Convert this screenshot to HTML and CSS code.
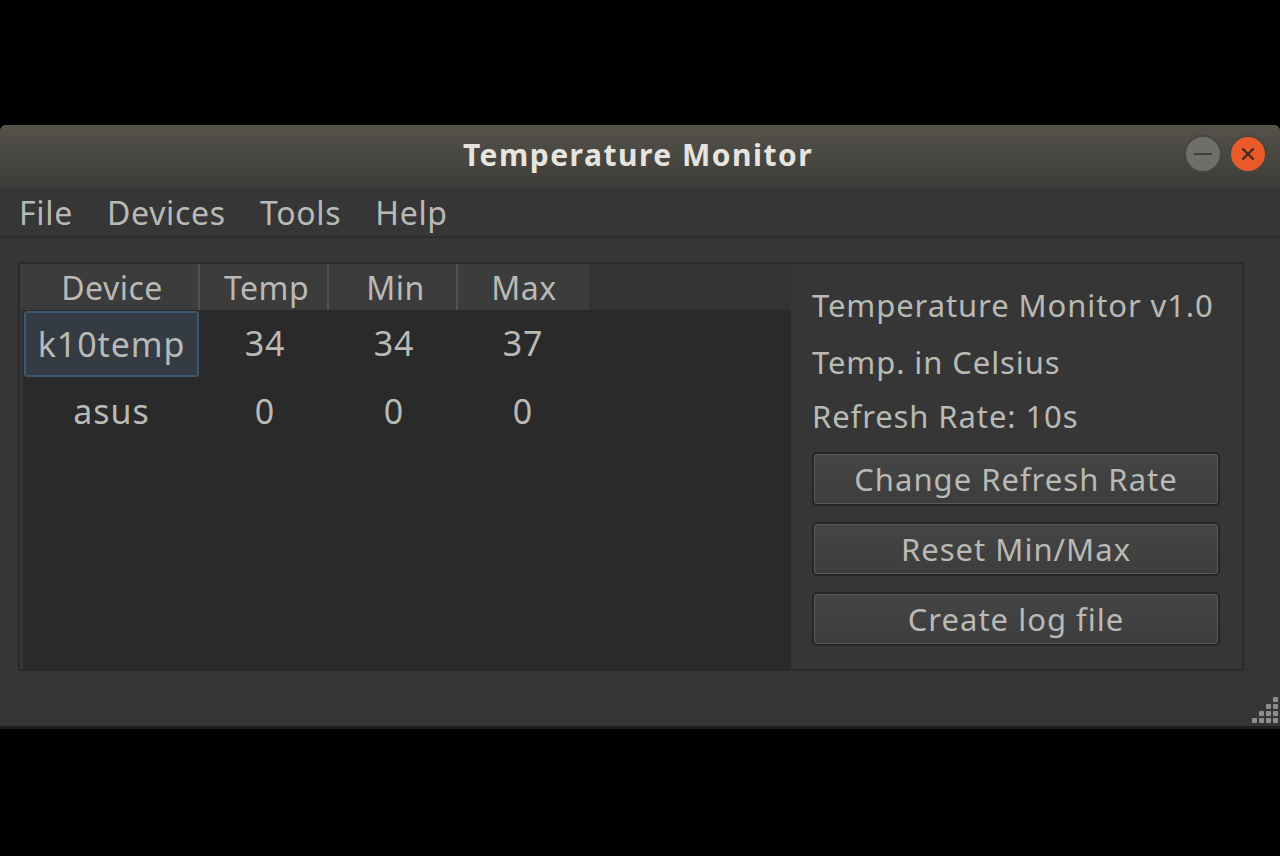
FILE: index.html
```html
<!doctype html>
<html lang="en">
<head>
  <meta charset="UTF-8">
  <title>Temperature Monitor</title>
  <link rel="stylesheet" href="styles.css">
</head>
<body>
  <div class="window">
    <header class="titlebar">
      <span class="title">Temperature Monitor</span>
      <div class="controls">
        <button class="control minimize" aria-label="Minimize">
          <svg width="20" height="20" viewBox="0 0 20 20"><path d="M1 10h18" stroke="#3f3e3b" stroke-width="2" fill="none"/></svg>
        </button>
        <button class="control close" aria-label="Close">
          <svg width="20" height="20" viewBox="0 0 20 20"><path d="M4.5 4.5l11 11M15.5 4.5l-11 11" stroke="#3a2a20" stroke-width="2.2" fill="none"/></svg>
        </button>
      </div>
    </header>

    <nav class="menubar">
      <a>File</a>
      <a>Devices</a>
      <a>Tools</a>
      <a>Help</a>
    </nav>

    <main class="content">
      <div class="panel">
        <section class="table">
          <div class="table-head">
            <div class="head-cell col-device">Device</div>
            <div class="head-cell col-num">Temp</div>
            <div class="head-cell col-num">Min</div>
            <div class="head-cell col-max">Max</div>
          </div>
          <div class="row">
            <div class="cell col-device selected">k10temp</div>
            <div class="cell col-num">34</div>
            <div class="cell col-num">34</div>
            <div class="cell col-max">37</div>
          </div>
          <div class="row">
            <div class="cell col-device">asus</div>
            <div class="cell col-num">0</div>
            <div class="cell col-num">0</div>
            <div class="cell col-max">0</div>
          </div>
        </section>

        <aside class="side">
          <p class="info first">Temperature Monitor v1.0</p>
          <p class="info second">Temp. in Celsius</p>
          <p class="info third">Refresh Rate: 10s</p>
          <button class="btn">Change Refresh Rate</button>
          <button class="btn">Reset Min/Max</button>
          <button class="btn">Create log file</button>
        </aside>
      </div>
    </main>

    <footer class="statusbar">
      <svg class="grip" width="28" height="26" viewBox="0 0 28 26">
        <g fill="#8e8e8b">
          <rect x="21" y="0" width="5" height="5" rx="1"/>
          <rect x="14" y="7" width="5" height="5" rx="1"/>
          <rect x="21" y="7" width="5" height="5" rx="1"/>
          <rect x="7" y="14" width="5" height="5" rx="1"/>
          <rect x="14" y="14" width="5" height="5" rx="1"/>
          <rect x="21" y="14" width="5" height="5" rx="1"/>
          <rect x="0" y="21" width="5" height="5" rx="1"/>
          <rect x="7" y="21" width="5" height="5" rx="1"/>
          <rect x="14" y="21" width="5" height="5" rx="1"/>
          <rect x="21" y="21" width="5" height="5" rx="1"/>
        </g>
      </svg>
    </footer>
  </div>
</body>
</html>
```

FILE: styles.css
```css
*{
  box-sizing: border-box;
}

html, body{
  height: 100%;
}

body{
  margin: 0;
  padding-top: 125px;
  overflow: hidden;
  color: #b9b9b5;
  font-family: "Noto Sans", "Open Sans", sans-serif;
  font-size: 31px;
  letter-spacing: .9px;
  background: #000;
}

.window{
  display: flex;
  height: 604px;
  background: #363636;
  border-bottom: 3px solid #1f1f1d;
  border-radius: 6px 6px 0 0;
  flex-direction: column;
  overflow: hidden;
}

.titlebar{
  display: flex;
  height: 63px;
  flex: none;
  align-items: center;
  justify-content: center;
  position: relative;
  background: linear-gradient(#55524b, #3d3c38);
}

.title{
  color: #e6e4df;
  font-size: 30px;
  font-weight: 700;
  letter-spacing: 1.5px;
  position: relative;
  top: -2px;
  left: -2px;
}

.controls{
  display: flex;
  gap: 7px;
  position: absolute;
  top: 10px;
  right: 13px;
}

.control{
  display: flex;
  width: 38px;
  height: 38px;
  padding: 0;
  border-radius: 50%;
  align-items: center;
  justify-content: center;
}

.minimize{
  background: #6f6e6a;
  border: 2px solid #464541;
}

.close{
  background: #e9592a;
  border: 2px solid #464541;
}

.menubar{
  display: flex;
  height: 50px;
  flex: none;
  padding: 0 19px;
  gap: 34px;
  align-items: center;
  font-size: 32px;
  letter-spacing: .7px;
  border-bottom: 2px solid #2d2d2d;
}

.content{
  flex: 1;
  padding: 24px 36px 0 18px;
}

.panel{
  display: flex;
  height: 409px;
  border: 2px solid #2a2a2a;
}

.table{
  width: 771px;
  flex: none;
  background: #2a2a2a;
  box-shadow: inset 3px 0 0 #383838;
}

.table-head{
  display: flex;
  height: 46px;
  font-size: 32px;
  letter-spacing: .5px;
  background: #333;
}

.head-cell{
  display: flex;
  padding-left: 6px;
  align-items: center;
  justify-content: center;
  background: #3c3c3c;
  border-right: 2px solid #525252;
}

.head-cell.col-max{
  padding-left: 1px;
  border-right: none;
}

.row{
  display: flex;
  height: 68px;
  font-size: 34px;
  padding-bottom: 2px;
}

.cell{
  display: flex;
  align-items: center;
  justify-content: center;
  border-right: 1px solid #272727;
}

.cell.col-num{
  padding-left: 2px;
}

.col-device{
  width: 180px;
}

.col-num{
  width: 129px;
}

.col-max{
  width: 131px;
}

.row .col-device{
  padding-left: 4px;
}

.row .selected{
  width: 175px;
  height: 66px;
  margin: 1px 1px 0 4px;
  padding-left: 0;
  background: #343b43;
  border: 2px solid #3b5670;
  border-radius: 3px;
  background-clip: padding-box;
}

.side{
  display: flex;
  flex: 1;
  padding: 0 22px 0 21px;
  flex-direction: column;
}

.info{
  margin: 0;
  line-height: 40px;
}

.first{
  margin-top: 21px;
}

.second{
  margin-top: 17px;
}

.third{
  margin-top: 14px;
}

.btn{
  height: 54px;
  margin-top: 16px;
  padding: 0;
  color: #b9b9b5;
  font-family: inherit;
  font-size: 31px;
  letter-spacing: 1px;
  background: linear-gradient(#454545, #3d3d3d);
  border: 2px solid #262626;
  box-shadow: inset 0 0 0 1px #5a5a5a;
  border-radius: 5px;
}

.statusbar{
  display: flex;
  flex: 1;
  align-items: flex-end;
  justify-content: flex-end;
}

.grip{
  display: block;
  margin-bottom: 3px;
}
```
